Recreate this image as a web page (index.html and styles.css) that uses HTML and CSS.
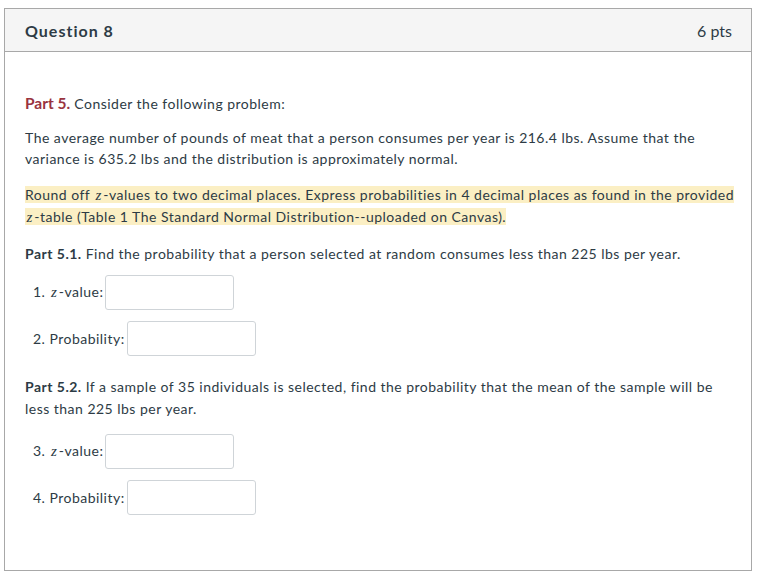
FILE: index.html
```html
<!DOCTYPE html>
<html>
<head>
<meta charset="utf-8">
<link rel="stylesheet" href="styles.css">
</head>
<body>
<div class="question">
  <div class="q-header">
    <span class="q-title">Question 8</span>
    <span class="q-pts">6 pts</span>
  </div>
  <div class="q-body">
    <p class="intro"><strong class="part">Part 5.</strong> Consider the following problem:</p>
    <p>The average number of pounds of meat that a person consumes per year is 216.4 lbs. Assume that the variance is 635.2 lbs and the distribution is approximately normal.</p>
    <p><span class="hl">Round off <i class="m">z</i>-values to two decimal places. Express probabilities in 4 decimal places as found in the provided <i class="m">z</i>-table (Table 1 The Standard Normal Distribution--uploaded on Canvas).</span></p>
    <p><strong>Part 5.1.</strong> Find the probability that a person selected at random consumes less than 225 lbs per year.</p>
    <div class="answers first">
      <div class="ans"><span class="lbl">1. <i class="m">z</i>-value:</span><span class="box"></span></div>
      <div class="ans"><span class="lbl">2. Probability:</span><span class="box"></span></div>
    </div>
    <p class="p52"><strong>Part 5.2.</strong> If a sample of 35 individuals is selected, find the probability that the mean of the sample will be less than 225 lbs per year.</p>
    <div class="answers">
      <div class="ans"><span class="lbl">3. <i class="m">z</i>-value:</span><span class="box"></span></div>
      <div class="ans"><span class="lbl">4. Probability:</span><span class="box"></span></div>
    </div>
  </div>
</div>
</body>
</html>
```
FILE: styles.css
```css
html, body {
  margin: 0;
  padding: 0;
  background: #ffffff;
}
body {
  font-family: Lato, "Liberation Sans", sans-serif;
  color: #2d3b45;
}
.question {
  margin: 8px 0 0 4px;
  width: 748px;
  height: 563px;
  border: 1px solid #a8a8a8;
  box-sizing: border-box;
}
.q-header {
  height: 43px;
  background: #f5f5f5;
  border-bottom: 1px solid #a8a8a8;
  box-sizing: border-box;
  display: flex;
  justify-content: space-between;
  align-items: center;
  padding: 0 19px 0 20px;
  font-size: 16px;
}
.q-title {
  font-weight: bold;
  letter-spacing: 1px;
  color: #2d3b45;
}
.q-pts {
  color: #2d3b45;
}
.q-body {
  padding: 0 12px 0 20px;
  font-size: 14px;
  letter-spacing: 0.48px;
  line-height: 21.5px;
}
.q-body p {
  margin: 0 0 14px 0;
}
.q-body p.intro {
  margin-top: 41px;
  margin-bottom: 12px;
}
.part {
  color: #993340;
  font-size: 15.5px;
  letter-spacing: 0;
}
.hl {
  background: #fbefc4;
}
.m {
  font-family: "Liberation Serif", serif;
  font-style: italic;
  font-size: 15px;
  padding: 0 1.5px;
}
.answers {
  display: flex;
  flex-direction: column;
  gap: 11px;
  padding-left: 8px;
  margin-top: -2px;
}
.answers.first {
  margin-top: -3px;
}
.ans {
  display: flex;
  align-items: center;
  gap: 2px;
}
.box {
  display: block;
  width: 129px;
  height: 35px;
  border: 1px solid #cfd4d8;
  border-radius: 3px;
  box-sizing: border-box;
  background: #fff;
}
.q-body p.p52 {
  margin-top: 20px;
  margin-bottom: 17px;
}
```
